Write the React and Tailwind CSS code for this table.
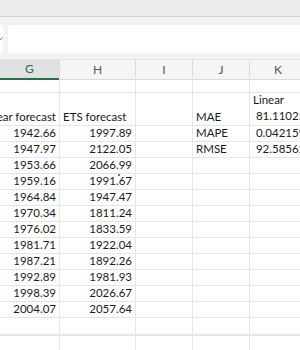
import React from 'react';

const linear = ['1942.66', '1947.97', '1953.66', '1959.16', '1964.84', '1970.34', '1976.02', '1981.71', '1987.21', '1992.89', '1998.39', '2004.07'];
const ets = ['1997.89', '2122.05', '2066.99', '1991.67', '1947.47', '1811.24', '1833.59', '1922.04', '1892.26', '1981.93', '2026.67', '2057.64'];
const metrics = [['MAPE', ' 0.042159'], ['RMSE', ' 92.58562']];

const grid = 'grid grid-cols-[60px_76px_57px_57px_57px]';

const Cell = ({ children, align = 'right', className = '' }) => (
  <div
    className={`border-r border-b border-[#e6e6e6] flex items-end px-[3px] pb-[1px] leading-[14px] overflow-hidden whitespace-pre ${align === 'right' ? 'justify-end' : 'justify-start'} ${className}`}
  >
    {children}
  </div>
);

const Header = ({ label, active }) => (
  <div
    className={`border-r border-[#dadada] flex items-center justify-center text-[12px] ${active ? 'bg-[#e1e1e1] text-[#217346] border-b-2 border-b-[#217346]' : 'bg-[#f5f5f5] text-[#555] border-b border-b-[#dadada]'}`}
  >
    {label}
  </div>
);

export default function App() {
  return (
    <div className="relative w-[300px] h-[350px] overflow-hidden bg-white text-[11.5px] text-[#1a1a1a] font-['Lato','Liberation_Sans',sans-serif]">
      {/* ribbon edge */}
      <div className="h-[17px] bg-[#ebebeb] border-b border-[#d4d4d4]" />

      {/* name box + formula bar */}
      <div className="flex gap-[5px] bg-[#f3f3f3] pt-[8px] pb-[6px]">
        <div className="w-[3px] h-[28px] bg-white rounded-r-[4px] flex items-center overflow-hidden">
          <svg width="6" height="4" viewBox="0 0 6 4" className="-ml-[3px]">
            <path d="M0.5 0.5 L3 3 L5.5 0.5" fill="none" stroke="#777" strokeWidth="1" />
          </svg>
        </div>
        <div className="flex-1 h-[28px] bg-white rounded-[4px] -mr-[6px]" />
      </div>

      {/* column headers */}
      <div className={`${grid} h-[17px] border-t border-[#e4e4e4]`}>
        <Header label="G" active />
        <Header label="H" />
        <Header label="I" />
        <Header label="J" />
        <Header label="K" />
      </div>

      {/* row 1 */}
      <div className={`${grid} h-[17px]`}>
        <Cell /><Cell /><Cell /><Cell /><Cell />
      </div>

      {/* row 2: titles */}
      <div className={`${grid} h-[33px]`}>
        <Cell>Linear forecast</Cell>
        <Cell align="left">ETS forecast</Cell>
        <Cell />
        <Cell align="left">MAE</Cell>
        <Cell align="left" className="flex-col !items-start justify-end">
          <span className="mb-[2px]">Linear</span>
          <span>{' 81.11025'}</span>
        </Cell>
      </div>

      {linear.map((v, i) => (
        <div key={v} className={`${grid} h-[16px]`}>
          <Cell>{v}</Cell>
          <Cell>{ets[i]}</Cell>
          <Cell />
          <Cell align="left">{metrics[i] ? metrics[i][0] : ''}</Cell>
          <Cell align="left">{metrics[i] ? metrics[i][1] : ''}</Cell>
        </div>
      ))}

      <div className={`${grid} h-[18px]`}>
        <Cell className="border-b-2" /><Cell className="border-b-2" /><Cell className="border-b-2" /><Cell className="border-b-2" /><Cell className="border-b-2" />
      </div>
      <div className={`${grid} h-[16px]`}>
        <Cell /><Cell /><Cell /><Cell /><Cell />
      </div>

      {/* stray red mark */}
      <div className="absolute left-[118px] top-[174px] w-[2px] h-[2px] rounded-full bg-[#e00]" />
    </div>
  );
}
